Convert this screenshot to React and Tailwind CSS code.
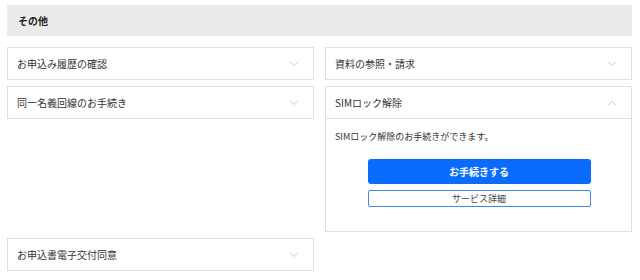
import React from "react";

const font = { fontFamily: '"Noto Sans CJK JP", "Noto Sans", sans-serif' };

function Chevron({ up }) {
  return (
    <svg width="10" height="6" viewBox="0 0 10 6" className="shrink-0">
      <path
        d={up ? "M1 5.5 L5 1.5 L9 5.5" : "M1 0.5 L5 4.5 L9 0.5"}
        fill="none"
        stroke="#c8c8c8"
        strokeWidth="1"
      />
    </svg>
  );
}

function Row({ label, up }) {
  return (
    <div className="h-[31px] flex items-center justify-between pl-[9px] pr-[14px]">
      <span className="text-[10px] leading-none text-[#333]">{label}</span>
      <Chevron up={up} />
    </div>
  );
}

function Card({ label }) {
  return (
    <div className="border border-[#e0e0e0] bg-white">
      <Row label={label} />
    </div>
  );
}

export default function App() {
  return (
    <div className="w-[640px] h-[280px] bg-white pt-[5px] pl-[7px] pr-[8px]" style={font}>
      <div className="h-[31px] bg-[#ebebeb] flex items-center pl-[11px]">
        <span className="text-[10px] font-bold text-[#222] leading-none">その他</span>
      </div>
      <div className="mt-[11px] grid grid-cols-2 gap-x-[11px] gap-y-[6px] items-start">
        <Card label="お申込み履歴の確認" />
        <Card label="資料の参照・請求" />
        <Card label="同一名義回線のお手続き" />
        <div className="border border-[#e0e0e0] bg-white">
          <Row label="SIMロック解除" up />
          <div className="border-t border-[#e0e0e0] h-[113px] pl-[9px] pr-[40px] pt-[13px]">
            <p className="text-[9px] leading-none text-[#333]">SIMロック解除のお手続きができます。</p>
            <div className="mt-[18px] flex flex-col items-center gap-[6px] pl-[32px]">
              <button className="w-[223px] h-[25px] rounded-[3px] bg-[#0a6cff] text-white text-[10px] font-bold leading-none flex items-center justify-center">
                お手続きする
              </button>
              <button className="w-[223px] h-[17px] rounded-[2px] border border-[#3b8ee4] bg-white text-[#444] text-[9px] leading-none flex items-center justify-center">
                サービス詳細
              </button>
            </div>
          </div>
        </div>
        <Card label="お申込書電子交付同意" />
      </div>
    </div>
  );
}
